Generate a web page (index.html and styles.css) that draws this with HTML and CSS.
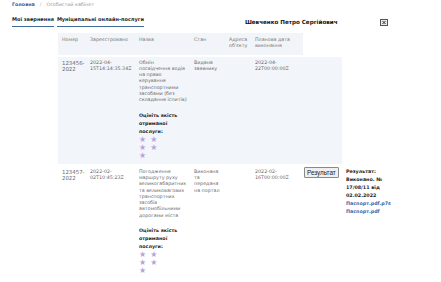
FILE: index.html
```html
<!DOCTYPE html>
<html lang="uk">
<head>
    <meta charset="UTF-8">
    <title>Особистий кабінет</title>
    <link rel="stylesheet" href="styles.css">
</head>
<body>
    <nav class="crumbs">
        <a href="#" class="crumb-home">Головна</a>
        <span class="crumb-sep">/</span>
        <span class="crumb-current">Особистий кабінет</span>
    </nav>

    <header class="topbar">
        <div class="tabs">
            <span class="tab">Мої звернення</span>
            <span class="tab">Муніципальні онлайн-послуги</span>
        </div>
        <div class="user-name">Шевченко Петро Сергійович</div>
        <svg class="logout" width="8" height="7" viewBox="0 0 8 7">
            <rect x="0.5" y="0.5" width="7" height="6" fill="#e9e9e9" stroke="#555" stroke-width="1"/>
            <path d="M2.5 2 L5.5 5 M5.5 2 L2.5 5" stroke="#333" stroke-width="1"/>
        </svg>
    </header>

    <section class="requests">
        <div class="row head">
            <div class="cell">Номер</div>
            <div class="cell">Зареєстровано</div>
            <div class="cell">Назва</div>
            <div class="cell">Стан</div>
            <div class="cell">Адреса<br>об'єкту</div>
            <div class="cell">Планова дата<br>виконання</div>
        </div>

        <div class="row shaded">
            <div class="cell num">123456-<br>2022</div>
            <div class="cell">2022-04-<br>15T14:14:35.34Z</div>
            <div class="cell">
                Обмін<br>посвідчення водія<br>на право<br>керування<br>транспортними<br>засобами (без<br>складання іспитів)
                <div class="rate">
                    <div class="rate-title">Оцініть якість отриманої послуги:</div>
                    <div class="stars"><span>★</span><span>★</span><span>★</span><span>★</span><span>★</span></div>
                </div>
            </div>
            <div class="cell">Видана<br>заявнику</div>
            <div class="cell"></div>
            <div class="cell">2022-04-<br>22T00:00:00Z</div>
            <div class="cell"></div>
        </div>

        <div class="row">
            <div class="cell num">123457-<br>2022</div>
            <div class="cell">2022-02-<br>02T10:45:23Z</div>
            <div class="cell">
                Погодження<br>маршруту руху<br>великогабаритних<br>та великовагових<br>транспортних<br>засобів<br>автомобільними<br>дорогами міста
                <div class="rate">
                    <div class="rate-title">Оцініть якість отриманої послуги:</div>
                    <div class="stars"><span>★</span><span>★</span><span>★</span><span>★</span><span>★</span></div>
                </div>
            </div>
            <div class="cell">Виконана<br>та<br>передана<br>на портал</div>
            <div class="cell"></div>
            <div class="cell">2022-02-<br>16T00:00:00Z</div>
            <div class="cell btn-cell"><button class="result-btn">Результат</button></div>
            <div class="cell result">
                Результат:<br>Виконано. №<br>17/08/11 від<br>02.02.2022<br>
                <a href="#">Паспорт.pdf.p7s</a><br>
                <a href="#">Паспорт.pdf</a>
            </div>
        </div>
    </section>
</body>
</html>
```

FILE: styles.css
```css
body {
    margin: 0;
    padding: 2px 0 0 12px;
    font-family: "DejaVu Sans", sans-serif;
    font-size: 4.8px;
    color: #6a6a6a;
    background: #fff;
}
.crumbs {
    line-height: 6px;
    display: flex;
    gap: 5px;
}
.crumb-home {
    color: #2d5c9c;
    font-weight: bold;
    text-decoration: none;
}
.crumb-sep {
    color: #aaa;
}
.crumb-current {
    color: #999;
}
.topbar {
    display: flex;
    align-items: flex-start;
    margin-top: 8px;
}
.tabs {
    display: flex;
    gap: 3px;
}
.tab {
    font-weight: bold;
    color: #222;
    font-size: 5px;
    line-height: 6px;
    padding-bottom: 4px;
    border-bottom: 1px solid #3f6a9a;
}
.user-name {
    margin-left: 101px;
    margin-top: 3px;
    font-weight: bold;
    font-size: 5.6px;
    color: #111;
}
.logout {
    margin: 3px 0 0 42px;
}
.requests {
    margin: 6px 0 0 46px;
}
.row {
    display: grid;
    grid-template-columns: 28px 49px 55px 35px 26px 52px 39px 52px;
    margin-bottom: 2px;
    line-height: 6.3px;
}
.row.head {
    grid-template-columns: 28px 49px 55px 35px 26px 52px;
    width: 245px;
    background: #f1f4f8;
    color: #777;
}
.row.head .cell {
    padding: 4px 3px 5px 4px;
}
.row.shaded .cell {
    background: #f2f5f9;
}
.cell {
    padding: 3px 3px 4px 4px;
}
.num {
    font-size: 5.4px;
}
.rate {
    margin-top: 8px;
}
.rate-title {
    font-weight: bold;
    color: #222;
    line-height: 8px;
    width: 45px;
}
.stars {
    display: flex;
    flex-wrap: wrap;
    width: 22px;
    column-gap: 4px;
    color: #b9a4da;
    font-size: 8px;
    line-height: 8px;
}
.btn-cell {
    padding: 1px 0 0 1px;
}
.result-btn {
    font-family: "Liberation Sans", sans-serif;
    font-size: 6.3px;
    padding: 1px 2px;
    color: #222;
    background: #efefef;
    border: 1px solid #8a8a8a;
    border-radius: 1px;
}
.result {
    padding: 2px 0 0 4px;
    font-weight: bold;
    color: #222;
    line-height: 8px;
}
.result a {
    color: #3567b0;
    text-decoration: none;
}
```
